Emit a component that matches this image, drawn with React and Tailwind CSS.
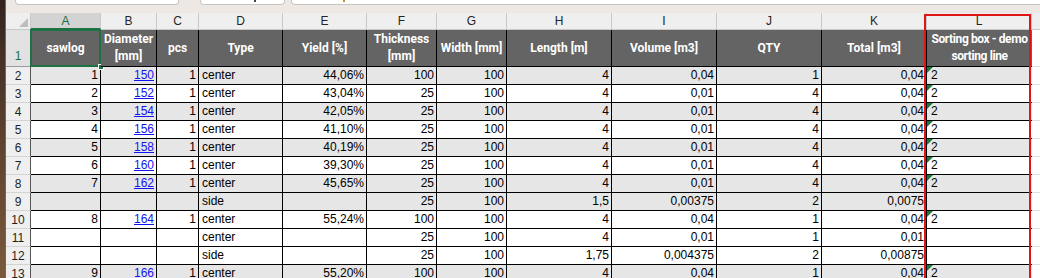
const cols = ['A', 'B', 'C', 'D', 'E', 'F', 'G', 'H', 'I', 'J', 'K', 'L'];

const headers = [
  'sawlog',
  'Diameter\n[mm]',
  'pcs',
  'Type',
  'Yield [%]',
  'Thickness\n[mm]',
  'Width [mm]',
  'Length [m]',
  'Volume [m3]',
  'QTY',
  'Total [m3]',
  'Sorting box - demo\nsorting line',
];

const rows = [
  { n: 2, grey: true, v: ['1', '150', '1', 'center', '44,06%', '100', '100', '4', '0,04', '1', '0,04', '2'] },
  { n: 3, grey: false, v: ['2', '152', '1', 'center', '43,04%', '25', '100', '4', '0,01', '4', '0,04', '2'] },
  { n: 4, grey: true, v: ['3', '154', '1', 'center', '42,05%', '25', '100', '4', '0,01', '4', '0,04', '2'] },
  { n: 5, grey: false, v: ['4', '156', '1', 'center', '41,10%', '25', '100', '4', '0,01', '4', '0,04', '2'] },
  { n: 6, grey: true, v: ['5', '158', '1', 'center', '40,19%', '25', '100', '4', '0,01', '4', '0,04', '2'] },
  { n: 7, grey: false, v: ['6', '160', '1', 'center', '39,30%', '25', '100', '4', '0,01', '4', '0,04', '2'] },
  { n: 8, grey: true, v: ['7', '162', '1', 'center', '45,65%', '25', '100', '4', '0,01', '4', '0,04', '2'] },
  { n: 9, grey: true, v: ['', '', '', 'side', '', '25', '100', '1,5', '0,00375', '2', '0,0075', ''] },
  { n: 10, grey: false, v: ['8', '164', '1', 'center', '55,24%', '100', '100', '4', '0,04', '1', '0,04', '2'] },
  { n: 11, grey: false, v: ['', '', '', 'center', '', '25', '100', '4', '0,01', '1', '0,01', ''] },
  { n: 12, grey: false, v: ['', '', '', 'side', '', '25', '100', '1,75', '0,004375', '2', '0,00875', ''] },
  { n: 13, grey: true, v: ['9', '166', '1', 'center', '55,20%', '100', '100', '4', '0,04', '1', '0,04', '2'] },
];

function DataCell({ col, value, grey }) {
  const bg = grey ? 'bg-[#e6e6e6]' : 'bg-white';
  if (col === 3) {
    return (
      <div className={`${bg} border-r border-b border-black flex items-end pl-[3px] pb-px leading-[15px]`}>
        {value}
      </div>
    );
  }
  if (col === 11) {
    return (
      <div className={`${bg} relative border-b border-black flex items-end pl-[4px] pb-px leading-[15px]`}>
        {value && (
          <span className="absolute top-0 left-0 w-0 h-0 border-t-[6px] border-r-[6px] border-t-[#1d7a3e] border-r-transparent" />
        )}
        {value}
      </div>
    );
  }
  return (
    <div className={`${bg} border-r border-b border-black flex items-end justify-end pr-[2px] pb-px leading-[15px]`}>
      {col === 1 ? <span className="text-[#1414f0] underline">{value}</span> : value}
    </div>
  );
}

export default function App() {
  return (
    <div className="relative w-[1040px] h-[278px] overflow-hidden bg-white flex font-['Liberation_Sans',sans-serif] text-[12px] text-black">
      <div className="w-[5px] shrink-0 bg-gradient-to-b from-[#33241f] via-[#5e4230] to-[#7a5a3d]" />
      <div className="w-px shrink-0 bg-[#2e8a56]" />
      <div className="flex-1 flex flex-col">
        <div className="h-[13px] shrink-0 bg-[#eee8e5] flex items-start">
          <div className="ml-[9px] w-[164px] h-[5px] bg-white border-x border-b border-[#c9c5c2] rounded-b-[4px]" />
          <div className="ml-[21px] w-[85px] h-[5px] bg-white border-x border-b border-[#c9c5c2] rounded-b-[4px] relative">
            <span className="absolute left-[53px] top-0 w-[2px] h-[2px] bg-[#444]" />
          </div>
          <div className="ml-[6px] flex-1 h-[5px] bg-white border-l border-b border-[#c9c5c2] rounded-bl-[4px] relative">
            <span className="absolute left-[51px] top-0 w-[2px] h-[2px] bg-[#c88a2a]" />
          </div>
        </div>

        <div className="grid grid-cols-[25px_70px_56px_42px_84px_84px_70px_70px_105px_105px_105px_105px_105px_1fr] grid-rows-[17px_37px_repeat(12,18px)]">
          <div className="relative bg-[#efefef] border-r border-b border-[#c8c8c8]">
            <span className="absolute right-[2px] bottom-[2px] w-0 h-0 border-l-[9px] border-b-[9px] border-l-transparent border-b-[#bdbdbd]" />
          </div>
          {cols.map((c) => (
            <div
              key={c}
              className={
                c === 'A'
                  ? 'bg-[#d3d3d3] border-r border-b-2 border-r-[#c8c8c8] border-b-[#1e7145] flex items-center justify-center text-[#1e6e40]'
                  : 'bg-[#efefef] border-r border-b border-[#c8c8c8] flex items-center justify-center text-[#262626]'
              }
            >
              {c}
            </div>
          ))}
          <div className="bg-[#efefef] border-b border-[#c8c8c8]" />

          <div className="bg-[#e2e2e2] border-r border-b border-[#9a9a9a] flex items-end justify-center pb-[1px] text-[#1e6e40]">
            1
          </div>
          {headers.map((h, i) => (
            <div
              key={h}
              className={`relative bg-[#646464] border-b border-black ${i < 11 ? 'border-r' : 'tracking-[-0.4px]'} flex items-center justify-center text-center text-white font-['Roboto',sans-serif] font-bold text-[12px] leading-[17px] whitespace-pre-line`}
            >
              {h}
              {i === 0 && (
                <>
                  <span className="absolute -inset-px border-2 border-[#1e7145]" />
                  <span className="absolute right-[-4px] bottom-[-4px] w-[6px] h-[6px] bg-[#1e7145] border border-white" />
                </>
              )}
            </div>
          ))}
          <div className="bg-white border-b border-[#e0e0e0]" />

          {rows.map((r) => (
            <div key={r.n} className="contents">
              <div className="bg-[#efefef] border-r border-b border-r-[#555] border-b-[#d4d4d4] flex items-center justify-center text-[#1f1f1f]">
                {r.n}
              </div>
              {r.v.map((val, i) => (
                <DataCell key={i} col={i} value={val} grey={r.grey} />
              ))}
              <div className="bg-white border-b border-[#e0e0e0]" />
            </div>
          ))}
        </div>
      </div>

      <div className="absolute left-[924px] top-[14px] w-[107px] h-[280px] border-2 border-[#e01515] pointer-events-none" />
    </div>
  );
}
